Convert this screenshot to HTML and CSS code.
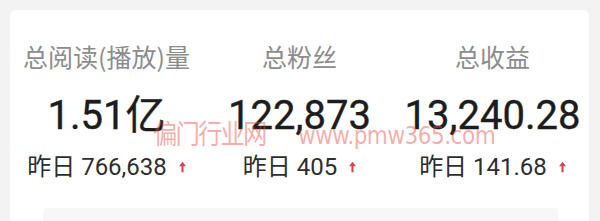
FILE: index.html
```html
<!DOCTYPE html>
<html lang="zh">
<head>
<meta charset="utf-8">
<link rel="stylesheet" href="styles.css">
</head>
<body>
<div class="card">
  <div class="stats">
    <div class="stat">
      <div class="label">总阅读(播放)量</div>
      <div class="value">1.51亿</div>
      <div class="delta">昨日 766,638 <svg class="up" viewBox="0 0 8 12"><path d="M4 0 L8 5 H5.2 V12 H2.8 V5 H0 Z"/></svg></div>
    </div>
    <div class="stat">
      <div class="label">总粉丝</div>
      <div class="value">122,873</div>
      <div class="delta">昨日 405 <svg class="up" viewBox="0 0 8 12"><path d="M4 0 L8 5 H5.2 V12 H2.8 V5 H0 Z"/></svg></div>
    </div>
    <div class="stat">
      <div class="label">总收益</div>
      <div class="value">13,240.28</div>
      <div class="delta">昨日 141.68 <svg class="up" viewBox="0 0 8 12"><path d="M4 0 L8 5 H5.2 V12 H2.8 V5 H0 Z"/></svg></div>
    </div>
  </div>
  <div class="panel"></div>
  <div class="watermark"><span class="wm-cn">偏门行业网</span><span class="wm-en">www.pmw365.com</span></div>
</div>
</body>
</html>
```

FILE: styles.css
```css
html, body {
  margin: 0;
  padding: 0;
}
body {
  background: #f3f3f3;
  width: 600px;
  height: 221px;
  overflow: hidden;
  font-family: Roboto, "Noto Sans CJK SC", sans-serif;
}
.card {
  position: relative;
  margin: 10px 11px 0 10px;
  background: #fff;
  border-radius: 6px 6px 0 0;
  padding-top: 30px;
  height: 181px;
  overflow: hidden;
}
.stats {
  display: grid;
  grid-template-columns: repeat(3, 1fr);
}
.stat {
  display: flex;
  flex-direction: column;
  align-items: center;
  white-space: nowrap;
}
.label {
  font-family: "Noto Sans CJK SC", sans-serif;
  font-size: 25px;
  line-height: 32px;
  color: #8c8c8c;
}
.value {
  margin-top: 21px;
  font-size: 40px;
  line-height: 46px;
  font-weight: 400;
  color: #1c1c1c;
  -webkit-text-stroke: 0.4px #1c1c1c;
}
.delta {
  margin-top: 13px;
  font-size: 24px;
  line-height: 30px;
  color: #2e2e2e;
  display: flex;
  align-items: center;
  gap: 6px;
}
.up {
  width: 7px;
  height: 12px;
  fill: #d9434c;
  margin-left: 6px;
}
.panel {
  margin: 26px 31px 0 33px;
  height: 40px;
  background: #f7f7f7;
  border-radius: 4px;
}
.watermark {
  position: absolute;
  left: 143px;
  top: 103px;
  display: flex;
  align-items: baseline;
  color: rgba(236, 72, 64, 0.45);
  pointer-events: none;
}
.wm-cn {
  font-family: "Noto Sans CJK SC", sans-serif;
  font-size: 27px;
  letter-spacing: -2px;
  transform: scaleX(0.9);
  transform-origin: left;
}
.wm-en {
  font-family: "DejaVu Sans Condensed", "DejaVu Sans", sans-serif;
  font-stretch: condensed;
  font-size: 24px;
  letter-spacing: -0.5px;
  margin-left: 20px;
}
```
